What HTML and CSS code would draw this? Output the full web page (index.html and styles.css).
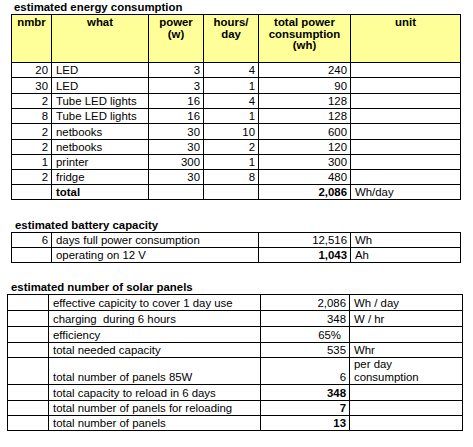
FILE: index.html
```html
<!DOCTYPE html>
<html lang="en">
<head>
	<meta charset="UTF-8">
	<title>estimated energy consumption</title>
	<link rel="stylesheet" href="styles.css">
</head>
<body>
	<h2 class="title t-energy">estimated energy consumption</h2>
	<table class="sheet energy">
		<colgroup>
			<col style="width:40px"><col style="width:97px"><col style="width:55px">
			<col style="width:55px"><col style="width:92px"><col style="width:110px">
		</colgroup>
		<tr class="head">
			<th>nmbr</th>
			<th>what</th>
			<th>power<br>(w)</th>
			<th>hours/<br>day</th>
			<th>total power<br>consumption<br>(wh)</th>
			<th>unit</th>
		</tr>
		<tr><td class="num">20</td><td>LED</td><td class="num">3</td><td class="num">4</td><td class="num">240</td><td></td></tr>
		<tr class="tall"><td class="num">30</td><td>LED</td><td class="num">3</td><td class="num">1</td><td class="num">90</td><td></td></tr>
		<tr><td class="num">2</td><td>Tube LED lights</td><td class="num">16</td><td class="num">4</td><td class="num">128</td><td></td></tr>
		<tr><td class="num">8</td><td>Tube LED lights</td><td class="num">16</td><td class="num">1</td><td class="num">128</td><td></td></tr>
		<tr class="tall"><td class="num">2</td><td>netbooks</td><td class="num">30</td><td class="num">10</td><td class="num">600</td><td></td></tr>
		<tr><td class="num">2</td><td>netbooks</td><td class="num">30</td><td class="num">2</td><td class="num">120</td><td></td></tr>
		<tr><td class="num">1</td><td>printer</td><td class="num">300</td><td class="num">1</td><td class="num">300</td><td></td></tr>
		<tr><td class="num">2</td><td>fridge</td><td class="num">30</td><td class="num">8</td><td class="num">480</td><td></td></tr>
		<tr><td></td><td class="bold">total</td><td></td><td></td><td class="num bold">2,086</td><td>Wh/day</td></tr>
	</table>

	<h2 class="title t-battery">estimated battery capacity</h2>
	<table class="sheet battery">
		<colgroup>
			<col style="width:40px"><col style="width:207px"><col style="width:92px"><col style="width:110px">
		</colgroup>
		<tr><td class="num">6</td><td>days full power consumption</td><td class="num">12,516</td><td>Wh</td></tr>
		<tr><td></td><td>operating on 12 V</td><td class="num bold">1,043</td><td>Ah</td></tr>
	</table>

	<h2 class="title t-solar">estimated number of solar panels</h2>
	<table class="sheet solar">
		<colgroup>
			<col style="width:41px"><col style="width:212px"><col style="width:89px"><col style="width:113px">
		</colgroup>
		<tr class="tall"><td></td><td>effective capicity to cover 1 day use</td><td class="num">2,086</td><td>Wh / day</td></tr>
		<tr class="tall"><td></td><td>charging&nbsp; during 6 hours</td><td class="num">348</td><td>W / hr</td></tr>
		<tr class="tall"><td></td><td>efficiency</td><td class="num pct">65%</td><td></td></tr>
		<tr><td></td><td>total needed capacity</td><td class="num">535</td><td>Whr</td></tr>
		<tr class="double"><td></td><td>total number of panels 85W</td><td class="num">6</td><td class="wrap">per day<br>consumption</td></tr>
		<tr class="tall"><td></td><td>total capacity to reload in 6 days</td><td class="num bold">348</td><td></td></tr>
		<tr><td></td><td>total number of panels for reloading</td><td class="num bold">7</td><td></td></tr>
		<tr><td></td><td>total number of panels</td><td class="num bold">13</td><td></td></tr>
	</table>
</body>
</html>
```

FILE: styles.css
```css
*{margin:0;padding:0}
body{
	font-family: "Liberation Sans", Arial, sans-serif;
	font-size: 11.4px;
	color: #000;
	background: #fff;
}
.title{
	font-size: 11.4px;
	font-weight: bold;
	line-height: 14px;
	height: 14px;
	white-space: nowrap;
}
.t-energy{ padding-left: 14px; }
.t-battery{ padding-left: 15px; margin-top: 18px; }
.t-solar{ padding-left: 11px; margin-top: 17px; }

.sheet{
	border-collapse: collapse;
	table-layout: fixed;
	margin-left: 11px;
}
.sheet.solar{ margin-left: 7px; }
.sheet td, .sheet th{
	border: 1px solid #000;
	padding: 0 4px;
	line-height: 14px;
	height: 14px;
	vertical-align: bottom;
	white-space: nowrap;
	overflow: hidden;
	text-align: left;
}
.sheet tr.tall td{ height: 15px; }
.sheet tr.double td{ height: 25px; }
.sheet td.wrap{ line-height: 13px; }
.sheet td.num{
	text-align: right;
	padding-right: 3px;
}
.sheet td.pct{ padding-right: 8px; }
.bold{ font-weight: bold; }

.head th{
	background-color: #ffff99;
	font-weight: bold;
	text-align: center;
	vertical-align: top;
	line-height: 11.5px;
	height: 45px;
	padding-top: 2px;
}
```
